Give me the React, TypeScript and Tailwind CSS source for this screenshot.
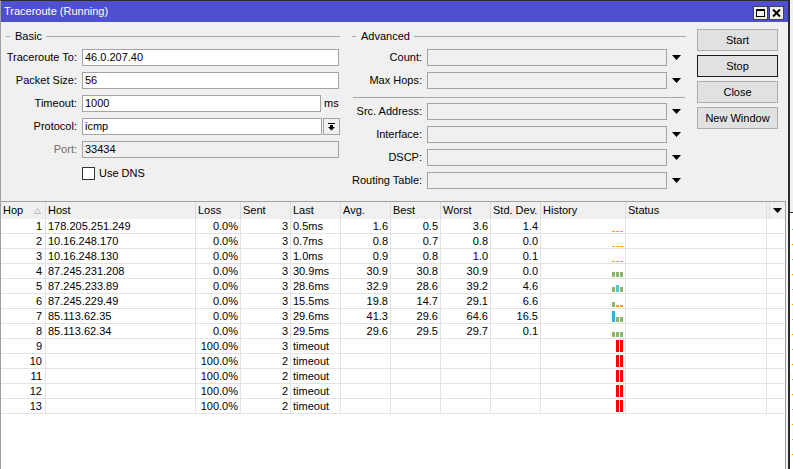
import React from 'react';

type Bar = { color: string; height: string } | null;

interface HopRow {
  hop: number;
  host: string;
  loss: string;
  sent: number;
  last: string;
  avg: string;
  best: string;
  worst: string;
  std: string;
  history: Bar[];
}

const orange1: Bar = { color: 'bg-[#ffa000]', height: 'h-[1px]' };
const orange2: Bar = { color: 'bg-[#ffa000]', height: 'h-[2px]' };
const green5: Bar = { color: 'bg-[#8ab56b]', height: 'h-[5px]' };
const cyan7: Bar = { color: 'bg-[#4fcad2]', height: 'h-[7px]' };
const blue11: Bar = { color: 'bg-[#39a9e1]', height: 'h-[11px]' };
const red12: Bar = { color: 'bg-[#ff0000]', height: 'h-[12px]' };

const rows: HopRow[] = [
  { hop: 1, host: '178.205.251.249', loss: '0.0%', sent: 3, last: '0.5ms', avg: '1.6', best: '0.5', worst: '3.6', std: '1.4', history: [orange1, orange1, orange1] },
  { hop: 2, host: '10.16.248.170', loss: '0.0%', sent: 3, last: '0.7ms', avg: '0.8', best: '0.7', worst: '0.8', std: '0.0', history: [orange1, orange1, orange1] },
  { hop: 3, host: '10.16.248.130', loss: '0.0%', sent: 3, last: '1.0ms', avg: '0.9', best: '0.8', worst: '1.0', std: '0.1', history: [orange1, orange1, orange1] },
  { hop: 4, host: '87.245.231.208', loss: '0.0%', sent: 3, last: '30.9ms', avg: '30.9', best: '30.8', worst: '30.9', std: '0.0', history: [green5, green5, green5] },
  { hop: 5, host: '87.245.233.89', loss: '0.0%', sent: 3, last: '28.6ms', avg: '32.9', best: '28.6', worst: '39.2', std: '4.6', history: [green5, cyan7, green5] },
  { hop: 6, host: '87.245.229.49', loss: '0.0%', sent: 3, last: '15.5ms', avg: '19.8', best: '14.7', worst: '29.1', std: '6.6', history: [green5, orange2, orange2] },
  { hop: 7, host: '85.113.62.35', loss: '0.0%', sent: 3, last: '29.6ms', avg: '41.3', best: '29.6', worst: '64.6', std: '16.5', history: [blue11, green5, green5] },
  { hop: 8, host: '85.113.62.34', loss: '0.0%', sent: 3, last: '29.5ms', avg: '29.6', best: '29.5', worst: '29.7', std: '0.1', history: [green5, green5, green5] },
  { hop: 9, host: '', loss: '100.0%', sent: 3, last: 'timeout', avg: '', best: '', worst: '', std: '', history: [null, red12, red12] },
  { hop: 10, host: '', loss: '100.0%', sent: 2, last: 'timeout', avg: '', best: '', worst: '', std: '', history: [null, red12, red12] },
  { hop: 11, host: '', loss: '100.0%', sent: 2, last: 'timeout', avg: '', best: '', worst: '', std: '', history: [null, red12, red12] },
  { hop: 12, host: '', loss: '100.0%', sent: 2, last: 'timeout', avg: '', best: '', worst: '', std: '', history: [null, red12, red12] },
  { hop: 13, host: '', loss: '100.0%', sent: 2, last: 'timeout', avg: '', best: '', worst: '', std: '', history: [null, red12, red12] },
];

const DownTriangle = () => (
  <svg width="9" height="5" viewBox="0 0 9 5">
    <path d="M0 0 H9 L4.5 5 Z" fill="#000" />
  </svg>
);

const GroupHeader = ({ title, lead }: { title: string; lead: string }) => (
  <div className={`h-[14px] flex items-center ${lead}`}>
    <div className="w-[4px] h-px bg-[#a8a8a8]" />
    <span className="ml-[5px] leading-none">{title}</span>
    <div className="ml-[4px] flex-1 h-px bg-[#a8a8a8]" />
  </div>
);

const TextBox = ({ value, width, disabled }: { value?: string; width: string; disabled?: boolean }) => (
  <div
    className={`${width} h-[17px] border border-[#a3a3a3] flex items-center pl-[2px] leading-none ${
      disabled ? 'bg-[#f0f0f0]' : 'bg-white'
    }`}
  >
    {value}
  </div>
);

const BasicRow = ({ label, children, muted }: { label: string; children: React.ReactNode; muted?: boolean }) => (
  <div className="flex items-center h-[17px]">
    <span className={`w-[76px] text-right leading-none whitespace-nowrap ${muted ? 'text-[#6d6d6d]' : ''}`}>{label}</span>
    <div className="ml-[5px] flex items-center">{children}</div>
  </div>
);

const AdvancedRow = ({ label }: { label: string }) => (
  <div className="flex items-center h-[17px]">
    <span className="w-[70px] text-right leading-none whitespace-nowrap">{label}</span>
    <div className="ml-[5px]">
      <TextBox width="w-[240px]" disabled />
    </div>
    <div className="w-[19px] flex justify-center">
      <DownTriangle />
    </div>
  </div>
);

const WinButton = ({ label, focused }: { label: string; focused?: boolean }) => (
  <button
    className={`h-[22px] w-full bg-[#e1e1e1] border flex items-center justify-center leading-none ${
      focused ? 'border-[#1c1c1c]' : 'border-[#adadad]'
    }`}
  >
    {label}
  </button>
);

const colWidths = [
  'w-[45px]',
  'w-[150px]',
  'w-[45px]',
  'w-[50px]',
  'w-[50px]',
  'w-[50px]',
  'w-[50px]',
  'w-[50px]',
  'w-[50px]',
  'w-[85px]',
  'w-[141px]',
];

const headers = ['Hop', 'Host', 'Loss', 'Sent', 'Last', 'Avg.', 'Best', 'Worst', 'Std. Dev.', 'History', 'Status'];

const HistoryBars = ({ bars }: { bars: Bar[] }) => (
  <div className="flex items-end justify-end gap-[1px] h-full pb-[1px] pr-[2px]">
    {bars.map((bar, i) => (
      <div key={i} className={`w-[3px] ${bar ? `${bar.color} ${bar.height}` : 'h-0'}`} />
    ))}
  </div>
);

export default function App() {
  const cell = 'h-full border-r border-[#e3e3e3] flex items-center leading-none whitespace-nowrap';

  return (
    <div className="w-[793px] h-[469px] flex overflow-hidden bg-white text-[11px] text-black font-['Liberation_Sans',Arial,sans-serif]">
      {/* Window */}
      <div className="w-[790px] h-full flex flex-col bg-[#f0f0f0] border-t border-t-[#2b2b2b] border-l border-l-[#a0a0a0] border-r-2 border-r-[#2b2b2b]">
        {/* Title bar */}
        <div className="h-[21px] bg-[#4f50cd] flex items-center pl-[3px] pr-[4px] text-white text-[11px]">
          <span className="leading-none">Traceroute (Running)</span>
          <div className="ml-auto flex gap-[1px] mt-[3px]">
            <div className="w-[15px] h-[14px] bg-[#f0f0f0] border border-[#404040] flex items-center justify-center">
              <div className="w-[9px] h-[8px] border border-black border-t-2" />
            </div>
            <div className="w-[15px] h-[14px] bg-[#f0f0f0] border border-[#404040] flex items-center justify-center">
              <svg width="9" height="8" viewBox="0 0 9 8">
                <path d="M1 0.5 L8 7.5 M8 0.5 L1 7.5" stroke="#000" strokeWidth="2" />
              </svg>
            </div>
          </div>
        </div>

        {/* Form */}
        <div className="h-[179px] flex pt-[7px]">
          {/* Basic */}
          <div className="w-[339px] flex flex-col">
            <GroupHeader title="Basic" lead="pl-[5px]" />
            <div className="mt-[6px] flex flex-col gap-[6px]">
              <BasicRow label="Traceroute To:">
                <TextBox value="46.0.207.40" width="w-[257px]" />
              </BasicRow>
              <BasicRow label="Packet Size:">
                <TextBox value="56" width="w-[257px]" />
              </BasicRow>
              <BasicRow label="Timeout:">
                <TextBox value="1000" width="w-[239px]" />
                <span className="ml-[3px] leading-none">ms</span>
              </BasicRow>
              <BasicRow label="Protocol:">
                <TextBox value="icmp" width="w-[240px]" />
                <div className="ml-[1px] w-[17px] h-[17px] border border-[#a3a3a3] bg-[#f0f0f0] flex items-center justify-center">
                  <svg width="7" height="8" viewBox="0 0 7 8">
                    <rect x="0" y="0" width="7" height="1" fill="#000" />
                    <rect x="2" y="2" width="3" height="2" fill="#000" />
                    <path d="M0 4 H7 L3.5 7.5 Z" fill="#000" />
                  </svg>
                </div>
              </BasicRow>
              <BasicRow label="Port:" muted>
                <TextBox value="33434" width="w-[257px]" disabled />
              </BasicRow>
            </div>
            <div className="mt-[9px] ml-[81px] flex items-center">
              <div className="w-[13px] h-[13px] bg-white border border-[#333]" />
              <span className="ml-[4px] leading-none">Use DNS</span>
            </div>
          </div>

          {/* Advanced */}
          <div className="ml-[12px] w-[334px] flex flex-col">
            <GroupHeader title="Advanced" lead="" />
            <div className="mt-[6px] flex flex-col gap-[6px]">
              <AdvancedRow label="Count:" />
              <AdvancedRow label="Max Hops:" />
            </div>
            <div className="mt-[8px] ml-[1px] w-[332px] h-px bg-[#a8a8a8]" />
            <div className="mt-[5px] flex flex-col gap-[6px]">
              <AdvancedRow label="Src. Address:" />
              <AdvancedRow label="Interface:" />
              <AdvancedRow label="DSCP:" />
              <AdvancedRow label="Routing Table:" />
            </div>
          </div>

          {/* Buttons */}
          <div className="ml-[11px] w-[81px] flex flex-col gap-[4px]">
            <WinButton label="Start" />
            <WinButton label="Stop" focused />
            <WinButton label="Close" />
            <WinButton label="New Window" />
          </div>
        </div>

        {/* Table */}
        <div className="flex-1 w-[785px] flex flex-col bg-white border-t border-t-[#a0a0a0] border-r border-r-[#a0a0a0]">
          <div className="h-[17px] flex bg-[#f0f0f0]">
            {headers.map((h, i) => (
              <div key={h} className={`${colWidths[i]} h-full border-r border-[#dcdcdc] flex items-center pl-[2px] leading-none`}>
                <span>{h}</span>
                {i === 0 && (
                  <svg className="ml-auto mr-[4px]" width="7" height="6" viewBox="0 0 7 6">
                    <path d="M3.5 0.5 L6.5 5.5 H0.5 Z" fill="none" stroke="#b8b8b8" />
                  </svg>
                )}
              </div>
            ))}
            <div className="w-[17px] h-full pl-[2px]">
              <div className="h-full border-l border-[#dcdcdc] flex items-center justify-center">
                <DownTriangle />
              </div>
            </div>
          </div>

          {rows.map((r) => (
            <div key={r.hop} className="h-[15px] flex border-b border-[#e3e3e3]">
              <div className={`${cell} w-[45px] justify-end pr-[3px]`}>{r.hop}</div>
              <div className={`${cell} w-[150px] pl-[2px]`}>{r.host}</div>
              <div className={`${cell} w-[45px] justify-end pr-[2px]`}>{r.loss}</div>
              <div className={`${cell} w-[50px] justify-end pr-[2px]`}>{r.sent}</div>
              <div className={`${cell} w-[50px] pl-[2px]`}>{r.last}</div>
              <div className={`${cell} w-[50px] justify-end pr-[2px]`}>{r.avg}</div>
              <div className={`${cell} w-[50px] justify-end pr-[2px]`}>{r.best}</div>
              <div className={`${cell} w-[50px] justify-end pr-[2px]`}>{r.worst}</div>
              <div className={`${cell} w-[50px] justify-end pr-[2px]`}>{r.std}</div>
              <div className="w-[85px] h-full border-r border-[#e3e3e3]">
                <HistoryBars bars={r.history} />
              </div>
              <div className={`${cell} w-[141px]`} />
              <div className="w-[17px] h-full" />
            </div>
          ))}
        </div>
      </div>

      {/* Window behind */}
      <div className="w-[3px] h-full flex flex-col">
        <div className="h-[212px] bg-[#f0f0f0]" />
        <div className="flex-1 bg-white border-t border-[#2b2b2b] pt-[16px] flex flex-col items-end gap-[14px] overflow-hidden">
          {Array.from({ length: 16 }).map((_, i) => (
            <div key={i} className="w-px h-px bg-[#ffa000] shrink-0" />
          ))}
        </div>
      </div>
    </div>
  );
}
